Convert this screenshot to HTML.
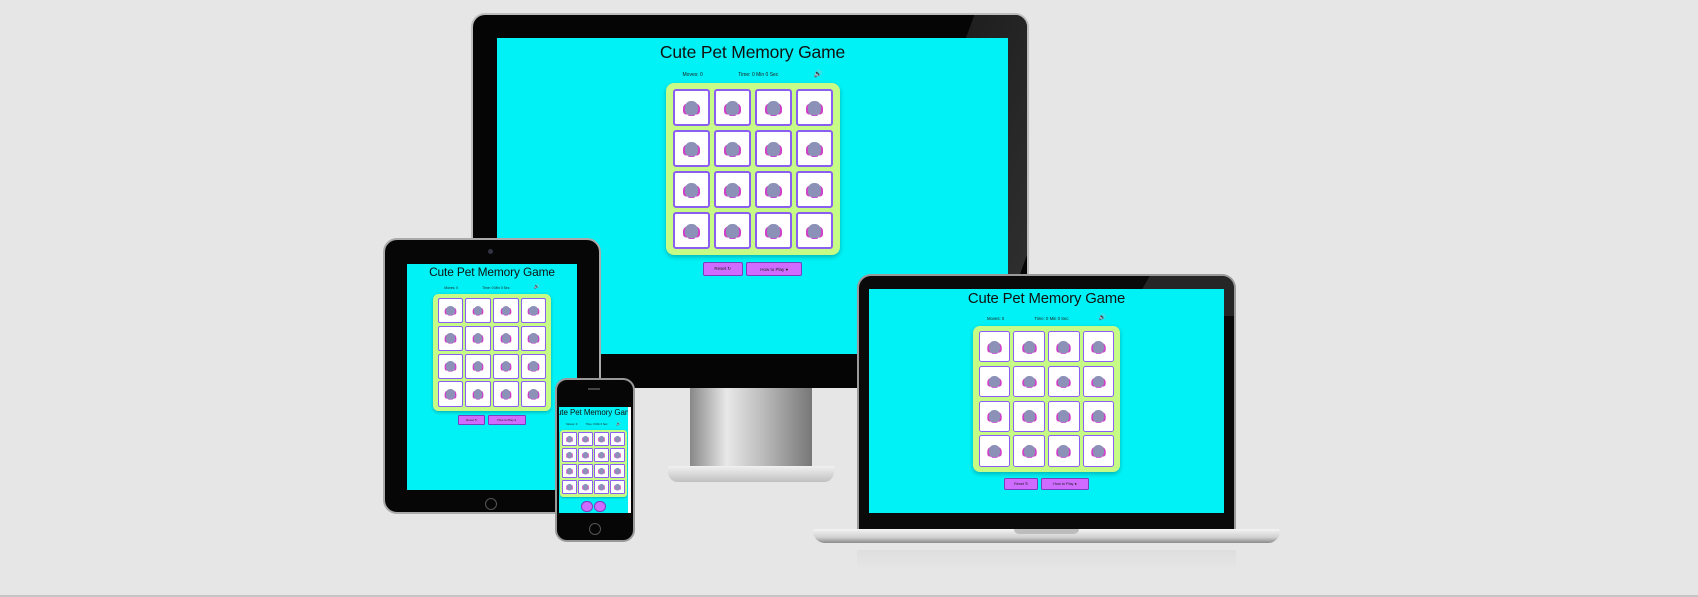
<!DOCTYPE html>
<html><head><meta charset="utf-8"><style>
*{box-sizing:border-box;margin:0;padding:0}
body{width:1698px;height:597px;background:#e6e6e6;position:relative;overflow:hidden;font-family:"Liberation Sans",sans-serif}
.abs{position:absolute}
.scr{position:absolute;background:#00f2f6;overflow:hidden}
.app{position:absolute;left:0;right:0;display:flex;flex-direction:column;align-items:center}
.t{font-size:1.75em;line-height:1.3;color:#111;white-space:nowrap;letter-spacing:-.01em}
.st{width:30em;display:flex;justify-content:space-between;font-size:.5em;margin-top:1.5em;color:#222;white-space:nowrap;padding:0 1em;height:1.4em;align-items:center}
.st b{font-size:1.4em;line-height:.8;font-weight:normal}
.bd{margin-top:.5em;background:#c6fc86;border-radius:.8em;padding:.6em .7em;display:grid;grid-template-columns:repeat(4,3.7em);gap:.4em;box-shadow:0 .2em .5em rgba(0,0,0,.25)}
.c{width:3.7em;height:3.7em;background:#fff;border:.2em solid #8a5ff0;border-radius:.3em;display:flex;align-items:center;justify-content:center}
.c i{display:block;width:1.3em;height:1.4em;background:#8c91b8;border-radius:45% 45% 35% 35%;box-shadow:-.35em .1em 0 -.15em #d040c8,.35em .1em 0 -.15em #d040c8,0 .35em 0 -.25em #c050d0}
.bt{margin-top:.7em;display:flex;gap:.35em}
.bt span{height:1.4em;background:#cf6cff;border:.1em solid #7a3cc0;border-radius:.2em;font-size:1em;display:flex;align-items:center;justify-content:center}
.bt span em{font-size:.45em;font-style:normal;color:#222;white-space:nowrap}
</style></head><body>

<!-- monitor -->
<div class="abs" style="left:471px;top:13px;width:558px;height:375px;background:#050505;border-radius:14px 14px 0 0;border:2px solid #bdbdbd;border-bottom:none;overflow:hidden"><div style="position:absolute;right:-40px;top:-20px;width:140px;height:300px;background:linear-gradient(90deg,#1f1f1f,#2e2e2e);transform:skewX(-20deg)"></div></div>
<div class="abs" style="left:690px;top:388px;width:122px;height:80px;background:linear-gradient(90deg,#888,#e8e8e8 30%,#bbb 60%,#777)"></div>
<div class="abs" style="left:668px;top:466px;width:166px;height:16px;background:linear-gradient(#f0f0f0,#c0c0c0);border-radius:0 0 10px 10px"></div>
<div class="scr" style="left:497px;top:38px;width:511px;height:316px">
 <div class="app" style="top:3px;font-size:10px" id="m"></div>
</div>

<!-- laptop -->
<div class="abs" style="left:857px;top:274px;width:379px;height:255px;background:#0a0a0a;border-radius:14px 14px 0 0;border:2px solid #9a9a9a;border-bottom:none;overflow:hidden"><div style="position:absolute;right:-30px;top:-20px;width:120px;height:60px;background:#262626;transform:skewX(-30deg)"></div></div>
<div class="abs" style="left:813px;top:529px;width:467px;height:14px;background:linear-gradient(#f4f4f4,#d0d0d0 60%,#8a8a8a);border-radius:2px 2px 12px 12px"></div>
<div class="abs" style="left:1014px;top:529px;width:65px;height:5px;background:#bdbdbd;border-radius:0 0 6px 6px"></div>
<div class="abs" style="left:857px;top:550px;width:379px;height:20px;background:linear-gradient(#dedede,#e6e6e6)"></div>
<div class="scr" style="left:869px;top:289px;width:355px;height:224px">
 <div class="app" style="top:1px;font-size:8.5px" id="l"></div>
</div>

<!-- tablet -->
<div class="abs" style="left:383px;top:238px;width:218px;height:276px;background:#060606;border-radius:14px;border:2px solid #aaa"></div>
<div class="abs" style="left:488px;top:249px;width:5px;height:5px;background:#334;border-radius:50%"></div>
<div class="abs" style="left:485px;top:498px;width:12px;height:12px;border:1px solid #555;border-radius:50%"></div>
<div class="scr" style="left:407px;top:264px;width:170px;height:226px">
 <div class="app" style="top:1px;font-size:6.8px" id="t"></div>
</div>

<!-- phone -->
<div class="abs" style="left:555px;top:378px;width:80px;height:164px;background:#060606;border-radius:12px;border:2px solid #999"></div>
<div class="abs" style="left:588px;top:388px;width:12px;height:2px;background:#444"></div>
<div class="abs" style="left:589px;top:523px;width:12px;height:12px;border:1px solid #555;border-radius:50%"></div>
<div class="scr" style="left:559px;top:407px;width:72px;height:106px;border-right:3px solid #fff">
 <div class="app" style="top:1px;font-size:3.9px" id="p"></div>
</div>

<div class="abs" style="left:0;top:595px;width:1698px;height:2px;background:#c4c4c4"></div>

<script>
var h='<div class="t">Cute Pet Memory Game</div><div class="st"><span>Moves: 0</span><span>Time: 0 Min 0 Sec</span><b>&#128266;</b></div><div class="bd">'+'<div class="c"><i></i></div>'.repeat(16)+'</div><div class="bt"><span style="width:4em"><em>Reset &#8635;</em></span><span style="width:5.6em"><em>How to Play &#9679;</em></span></div>';
['m','l','t'].forEach(function(id){document.getElementById(id).innerHTML=h});
document.getElementById('p').innerHTML='<div class="t" style="font-size:2.05em">Cute Pet Memory Game</div><div class="st" style="width:22em;margin-top:1.6em;font-size:.7em"><span>Moves: 0</span><span>Time: 0 Min 0 Sec</span><b>&#128266;</b></div><div class="bd" style="margin-top:.8em;padding:.6em">'+'<div class="c"><i></i></div>'.repeat(16)+'</div><div class="bt" style="margin-top:1em"><span style="width:3em;height:3em;border-radius:50%"></span><span style="width:3em;height:3em;border-radius:50%"></span></div>';
</script>
</body></html>
